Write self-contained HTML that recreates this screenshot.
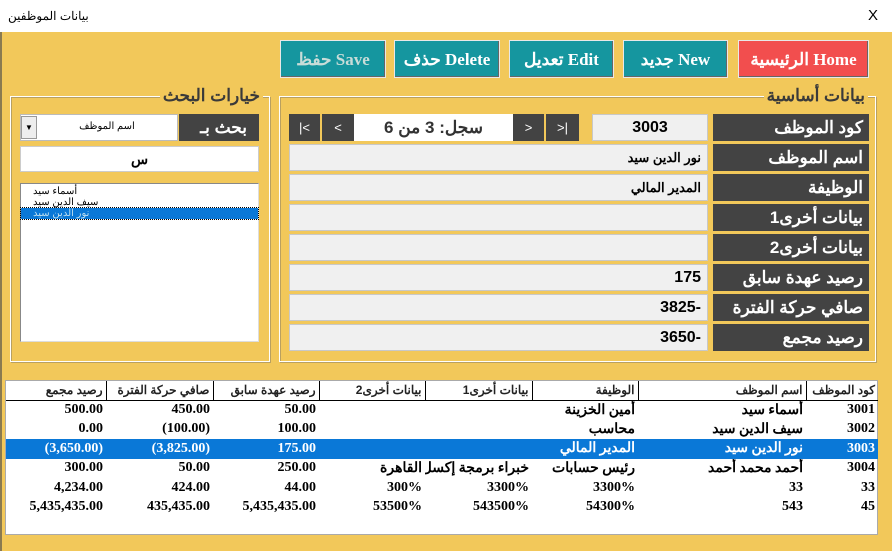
<!DOCTYPE html>
<html><head><meta charset="utf-8"><style>
*{box-sizing:border-box;margin:0;padding:0}
body{width:892px;height:551px;overflow:hidden;background:#F2C85A;font-family:"Liberation Sans","Noto Sans CJK SC",sans-serif;position:relative}
.a{position:absolute}
.title{left:0;top:0;width:892px;height:32px;background:#fff;font-size:12px}
.btn{top:40px;height:38px;color:#fff;font-family:"Liberation Serif","Noto Serif CJK SC",serif;font-weight:bold;font-size:17px;text-align:center;line-height:38px;border:1px solid #e8e8e8;box-shadow:inset -1px -1px 0 #666}
.teal{background:#15969F}
.grp{border:1px solid #fff;box-shadow:inset 1px 1px 0 #b9a060, 1px 1px 0 #b9a060}
.gt{background:#F2C85A;font-weight:bold;font-size:17px;color:#3a3a3a;padding:0 3px;line-height:20px}
.lbl{background:#434343;color:#fff;font-weight:bold;font-size:17px;text-align:right;padding-right:6px;line-height:27px;height:27px;direction:rtl}
.fld{background:#F0F0F0;border:1px solid #c8c8c8;height:27px;font-weight:bold;font-size:13px;direction:rtl;text-align:right;padding-right:6px;line-height:25px}
.nav{background:#434343;color:#fff;height:27px;text-align:center;line-height:27px;font-size:13px;top:114px;direction:ltr;unicode-bidi:isolate-override}
table{border-collapse:collapse;font-family:"Liberation Serif","Noto Serif CJK SC",serif;font-weight:bold;font-size:14px;direction:rtl;table-layout:fixed}
td{height:19.5px;text-align:right;padding:0 3px;white-space:nowrap;overflow:hidden}
th{height:19px;font-weight:bold;font-family:"Liberation Sans","Noto Sans CJK SC",sans-serif;font-size:12px;text-align:right;padding:0 3px;border-left:1px solid #000;border-bottom:1px solid #000;color:#222}
tr.sel td{background:#0A78D7;color:#fff}
.li{text-align:left;padding-left:12px;line-height:11px}
</style></head><body>
<div class="a title"><span class="a" style="left:8px;top:9px">بيانات الموظفين</span><span class="a" style="right:14px;top:7px;font-size:15px">X</span></div>
<div class="a" style="left:0;top:32px;width:2px;height:519px;background:#8a7a50"></div>
<div class="a btn" style="left:738px;width:131px;background:#F24E4E">الرئيسية Home</div>
<div class="a btn teal" style="left:623px;width:105px">جديد New</div>
<div class="a btn teal" style="left:509px;width:105px">تعديل Edit</div>
<div class="a btn teal" style="left:394px;width:106px">حذف Delete</div>
<div class="a btn teal" style="left:280px;width:106px;color:#c8dcd8">حفظ Save</div>

<div class="a grp" style="left:279px;top:96px;width:597px;height:266px"></div>
<div class="a gt" style="right:24px;top:86px">بيانات أساسية</div>
<div class="a grp" style="left:10px;top:96px;width:260px;height:266px"></div>
<div class="a gt" style="right:629px;top:86px">خيارات البحث</div>

<div class="a lbl" style="left:713px;top:114px;width:156px">كود الموظف</div>
<div class="a fld" style="left:592px;top:114px;width:116px;text-align:center;padding:0;font-size:16px">3003</div>
<div class="a nav" style="left:546px;width:33px">&gt;|</div>
<div class="a nav" style="left:513px;width:31px">&gt;</div>
<div class="a" style="left:354px;top:114px;width:159px;height:27px;background:#fff;text-align:center;font-weight:bold;font-size:17px;line-height:27px;color:#333;direction:rtl">سجل: 3 من 6</div>
<div class="a nav" style="left:322px;width:32px">&lt;</div>
<div class="a nav" style="left:289px;width:31px">|&lt;</div>

<div class="a lbl" style="left:713px;top:144px;width:156px">اسم الموظف</div>
<div class="a fld" style="left:289px;top:144px;width:419px">نور الدين سيد</div>
<div class="a lbl" style="left:713px;top:174px;width:156px">الوظيفة</div>
<div class="a fld" style="left:289px;top:174px;width:419px">المدير المالي</div>
<div class="a lbl" style="left:713px;top:204px;width:156px">بيانات أخرى1</div>
<div class="a fld" style="left:289px;top:204px;width:419px"></div>
<div class="a lbl" style="left:713px;top:234px;width:156px">بيانات أخرى2</div>
<div class="a fld" style="left:289px;top:234px;width:419px"></div>
<div class="a lbl" style="left:713px;top:264px;width:156px">رصيد عهدة سابق</div>
<div class="a fld" style="left:289px;top:264px;width:419px;font-size:16px">175</div>
<div class="a lbl" style="left:713px;top:294px;width:156px">صافي حركة الفترة</div>
<div class="a fld" style="left:289px;top:294px;width:419px;font-size:16px">-3825</div>
<div class="a lbl" style="left:713px;top:324px;width:156px">رصيد مجمع</div>
<div class="a fld" style="left:289px;top:324px;width:419px;font-size:16px">-3650</div>

<div class="a lbl" style="left:179px;top:114px;width:80px;padding-right:12px">بحث بـ</div>
<div class="a" style="left:20px;top:114px;width:158px;height:27px;background:#fff;border:1px solid #bbb;font-size:10px;text-align:center;line-height:24px;padding-left:16px">اسم الموظف</div>
<div class="a" style="left:21px;top:116px;width:16px;height:23px;background:#eee;border:1px solid #999;font-size:8px;text-align:center;line-height:21px">▼</div>
<div class="a" style="left:20px;top:146px;width:239px;height:26px;background:#fff;border:1px solid #ccc;text-align:center;font-weight:bold;font-size:14px;line-height:24px">س</div>
<div class="a" style="left:20px;top:183px;width:239px;height:159px;background:#fff;border:1px solid #888;border-right-color:#ddd;border-bottom-color:#ddd;font-size:10px;padding-top:2px">
<div class="li">أسماء سيد</div><div class="li">سيف الدين سيد</div><div class="li" style="background:#0A78D7;color:#bde;outline:1px dotted #000">نور الدين سيد</div>
</div>

<div class="a" style="left:5px;top:380px;width:873px;height:155px;background:#fff;border:1px solid #aaa">
<table style="width:872px">
<colgroup><col style="width:72px"><col style="width:168px"><col style="width:106px"><col style="width:107px"><col style="width:106px"><col style="width:106px"><col style="width:107px"><col style="width:100px"></colgroup>
<tr><th>كود الموظف</th><th>اسم الموظف</th><th>الوظيفة</th><th>بيانات أخرى1</th><th>بيانات أخرى2</th><th>رصيد عهدة سابق</th><th>صافي حركة الفترة</th><th style="border-left:none">رصيد مجمع</th></tr>
<tr><td>3001</td><td>أسماء سيد</td><td>أمين الخزينة</td><td></td><td></td><td>50.00</td><td>450.00</td><td>500.00</td></tr>
<tr><td>3002</td><td>سيف الدين سيد</td><td>محاسب</td><td></td><td></td><td>100.00</td><td>(100.00)</td><td>0.00</td></tr>
<tr class="sel"><td>3003</td><td>نور الدين سيد</td><td>المدير المالي</td><td></td><td></td><td>175.00</td><td>(3,825.00)</td><td>(3,650.00)</td></tr>
<tr><td>3004</td><td>أحمد محمد أحمد</td><td>رئيس حسابات</td><td>خبراء برمجة إكسل</td><td>القاهرة</td><td>250.00</td><td>50.00</td><td>300.00</td></tr>
<tr><td>33</td><td>33</td><td>3300%</td><td>3300%</td><td>300%</td><td>44.00</td><td>424.00</td><td>4,234.00</td></tr>
<tr><td>45</td><td>543</td><td>54300%</td><td>543500%</td><td>53500%</td><td>5,435,435.00</td><td>435,435.00</td><td>5,435,435.00</td></tr>
</table></div>
</body></html>
